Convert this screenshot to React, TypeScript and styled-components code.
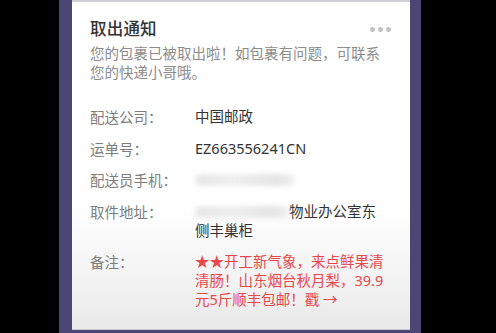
import React from "react";
import styled, { createGlobalStyle } from "styled-components";

const Global = createGlobalStyle`
  html, body { margin: 0; padding: 0; background: #000; }
  body { font-family: "Noto Sans CJK SC", "Noto Sans", sans-serif; }
  #root { width: 496px; height: 333px; overflow: hidden; }
`;

const Stage = styled.div`
  width: 496px;
  height: 333px;
  background: #000;
  display: flex;
  justify-content: flex-start;
`;

const Phone = styled.div`
  margin-left: 59px;
  width: 362px;
  height: 333px;
  box-sizing: border-box;
  padding: 0 11px 3px 13px;
  background: #4b4775;
  display: flex;
  flex-direction: column;
`;

const Card = styled.div`
  flex: 1;
  border-top: 2px solid #cfcfd4;
  margin-top: 0;
  border-bottom: 1px solid #c9c9cf;
  background: linear-gradient(#ffffff 0%, #ffffff 62%, #f3f3f3 85%, #e9e9e9 100%);
  padding: 14px 19px 0 18px;
  box-sizing: border-box;
  display: flex;
  flex-direction: column;
`;

const Header = styled.div`
  display: flex;
  justify-content: space-between;
  align-items: center;
  height: 24px;
`;

const Title = styled.div`
  font-size: 16.5px;
  line-height: 24px;
  color: #333;
  font-weight: 500;
  letter-spacing: 0.2px;
`;

const Dots = styled.div`
  display: flex;
  gap: 3px;
  margin-top: 2px;
`;

const Dot = styled.span`
  width: 5px;
  height: 5px;
  border-radius: 50%;
  background: #c4c4c4;
`;

const Subtitle = styled.div`
  margin-top: 3px;
  font-size: 14.5px;
  line-height: 19px;
  color: #8c8c8c;
  width: 300px;
`;

const Rows = styled.div`
  margin-top: 26px;
  display: flex;
  flex-direction: column;
  gap: 12.5px;
`;

const Row = styled.div`
  display: flex;
  font-size: 14.5px;
  line-height: 19px;
`;

const Label = styled.div`
  width: 105px;
  flex: none;
  color: #7d7d7d;
`;

const Value = styled.div<{ $red?: boolean }>`
  flex: 1;
  color: ${(p) => (p.$red ? "#e9474b" : "#333")};
  font-family: "Noto Sans", "Noto Sans CJK SC", sans-serif;
`;

const Blur = styled.span<{ $w: number }>`
  display: inline-block;
  width: ${(p) => p.$w}px;
  height: 12px;
  vertical-align: -1px;
  border-radius: 6px;
  background: linear-gradient(90deg, #e6e6e6, #efefef 40%, #e4e4e4 80%, #eeeeee);
  filter: blur(2.5px);
`;

export default function App() {
  return (
    <>
      <Global />
      <Stage>
        <Phone>
          <Card>
            <Header>
              <Title>取出通知</Title>
              <Dots>
                <Dot />
                <Dot />
                <Dot />
              </Dots>
            </Header>
            <Subtitle>您的包裹已被取出啦！如包裹有问题，可联系您的快递小哥哦。</Subtitle>
            <Rows>
              <Row>
                <Label>配送公司：</Label>
                <Value>中国邮政</Value>
              </Row>
              <Row>
                <Label>运单号：</Label>
                <Value>EZ663556241CN</Value>
              </Row>
              <Row>
                <Label>配送员手机：</Label>
                <Value>
                  <Blur $w={100} />
                </Value>
              </Row>
              <Row>
                <Label>取件地址：</Label>
                <Value>
                  <Blur $w={94} />物业办公室东
                  <br />
                  侧丰巢柜
                </Value>
              </Row>
              <Row>
                <Label>备注：</Label>
                <Value $red>
                  ★★开工新气象，来点鲜果清
                  <br />
                  清肠！山东烟台秋月梨，39.9
                  <br />
                  元5斤顺丰包邮！戳 →
                </Value>
              </Row>
            </Rows>
          </Card>
        </Phone>
      </Stage>
    </>
  );
}
